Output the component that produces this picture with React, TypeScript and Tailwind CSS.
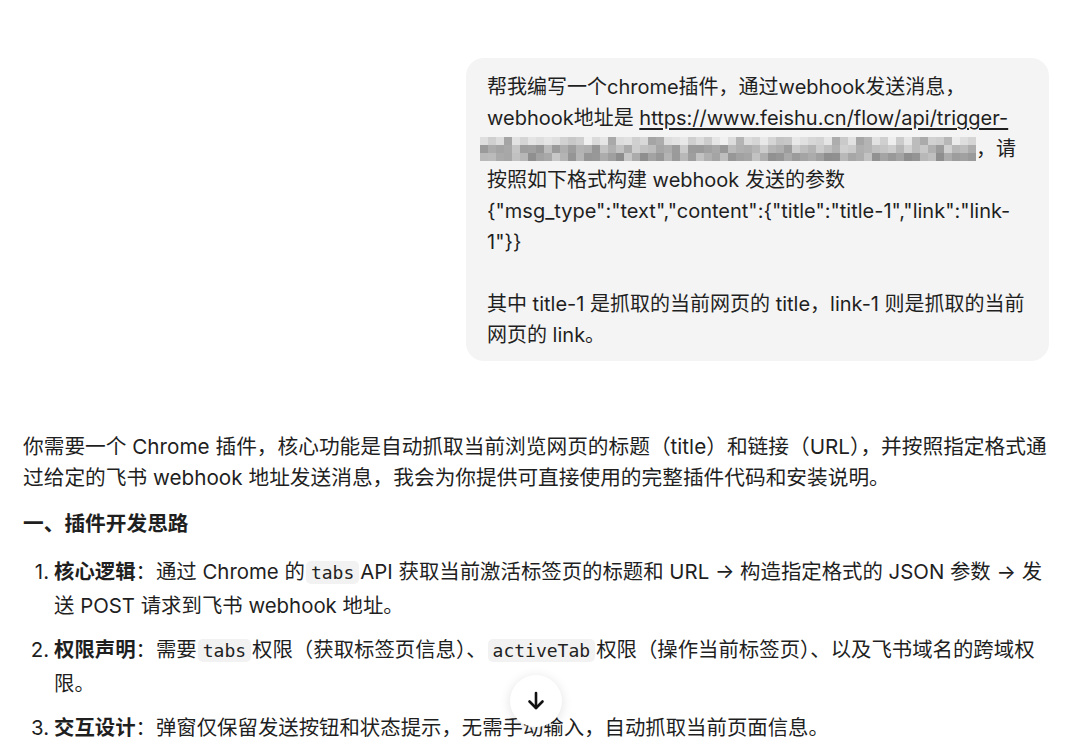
import { Fragment } from "react";

const font = { fontFamily: '"Inter", "Noto Sans CJK SC", sans-serif' };

// pixelated strip standing in for the masked part of the webhook URL
const BLOCK = 8;
const COLS = 62;
const mosaic: { x: number; y: number; fill: string }[] = (() => {
  let seed = 7;
  const rnd = () => {
    seed = (seed * 9301 + 49297) % 233280;
    return seed / 233280;
  };
  const cells: { x: number; y: number; fill: string }[] = [];
  for (let r = 0; r < 3; r++) {
    for (let c = 0; c < COLS; c++) {
      const base = r === 0 ? 222 : r === 1 ? 180 : 170;
      const spread = r === 0 ? 40 : 60;
      let v = Math.round(base - spread / 2 + rnd() * spread);
      if (r === 0 && rnd() > 0.8) v -= 40;
      v = Math.max(110, Math.min(244, v));
      const h = v.toString(16).padStart(2, "0");
      cells.push({ x: c * BLOCK, y: r * BLOCK, fill: `#${h}${h}${h}` });
    }
  }
  return cells;
})();

const Mosaic = () => (
  <svg
    width={COLS * BLOCK}
    height={24}
    viewBox={`0 0 ${COLS * BLOCK} 24`}
    className="inline-block align-middle -ml-[7px] -mt-[3px]"
  >
    {mosaic.map((m, i) => (
      <rect key={i} x={m.x} y={m.y} width={BLOCK} height={BLOCK} fill={m.fill} />
    ))}
  </svg>
);

const Code = ({ children }: { children: string }) => (
  <code className="mx-[1px] rounded-[5px] bg-[#f2f2f2] px-[5px] py-[1px] font-['DejaVu_Sans_Mono',monospace] text-[18px] text-[#222]">
    {children}
  </code>
);

const items = [
  {
    label: "核心逻辑",
    body: (
      <>
        通过 Chrome 的<Code>tabs</Code>API 获取当前激活标签页的标题和 URL → 构造指定格式的 JSON 参数 → 发
        <br />
        送 POST 请求到飞书 webhook 地址。
      </>
    ),
  },
  {
    label: "权限声明",
    body: (
      <>
        需要<Code>tabs</Code>权限（获取标签页信息）、<Code>activeTab</Code>权限（操作当前标签页）、以及飞书域名的跨域权
        <br />
        限。
      </>
    ),
  },
  {
    label: "交互设计",
    body: <>弹窗仅保留发送按钮和状态提示，无需手动输入，自动抓取当前页面信息。</>,
  },
];

export default function App() {
  return (
    <div className="relative h-[747px] overflow-hidden bg-white text-[#1f1f1f]" style={font}>
      <div className="flex flex-col pl-[23px] pr-[31px] pt-[58px]">
        {/* user message */}
        <div className="ml-auto w-[583px] rounded-[18px] bg-[#f4f4f4] pl-[21px] pr-[18px] pt-[14px] pb-[10px] text-[20px] leading-[31px] whitespace-nowrap">
          帮我编写一个chrome插件，通过webhook发送消息，
          <br />
          webhook地址是 <span className="underline underline-offset-[3px]">https://www.feishu.cn/flow/api/trigger-</span>
          <br />
          <Mosaic />，请
          <br />
          按照如下格式构建 webhook 发送的参数
          <br />
          {'{"msg_type":"text","content":{"title":"title-1","link":"link-'}
          <br />
          {'1"}}'}
          <br />
          <br />
          其中 title-1 是抓取的当前网页的 title，link-1 则是抓取的当前
          <br />
          网页的 link。
        </div>

        {/* assistant answer */}
        <p className="mt-[70px] text-[20.7px] leading-[31px] whitespace-nowrap">
          你需要一个 Chrome 插件，核心功能是自动抓取当前浏览网页的标题（title）和链接（URL），并按照指定格式通
          <br />
          过给定的飞书 webhook 地址发送消息，我会为你提供可直接使用的完整插件代码和安装说明。
        </p>

        <h3 className="mt-[15px] text-[20.7px] font-bold leading-[31px]">一、插件开发思路</h3>

        <ol className="mt-[16px] flex flex-col gap-[11px]">
          {items.map((it, i) => (
            <li key={i} className="flex text-[20.4px] leading-[33px] whitespace-nowrap">
              <span className="w-[31px] shrink-0 pr-[5px] text-right">{i + 1}.</span>
              <span>
                <Fragment>
                  <b className="font-bold">{it.label}</b>：{it.body}
                </Fragment>
              </span>
            </li>
          ))}
        </ol>
      </div>

      {/* scroll to bottom */}
      <button className="absolute left-[510px] top-[675px] flex h-[52px] w-[52px] items-center justify-center rounded-full bg-white shadow-[0_2px_12px_rgba(0,0,0,0.12)]">
        <svg width="18" height="20" viewBox="0 0 18 20" fill="none" stroke="#111" strokeWidth="2.6" strokeLinecap="round" strokeLinejoin="round">
          <path d="M9 2v15" />
          <path d="M2.5 10.5 9 17l6.5-6.5" />
        </svg>
      </button>
    </div>
  );
}
